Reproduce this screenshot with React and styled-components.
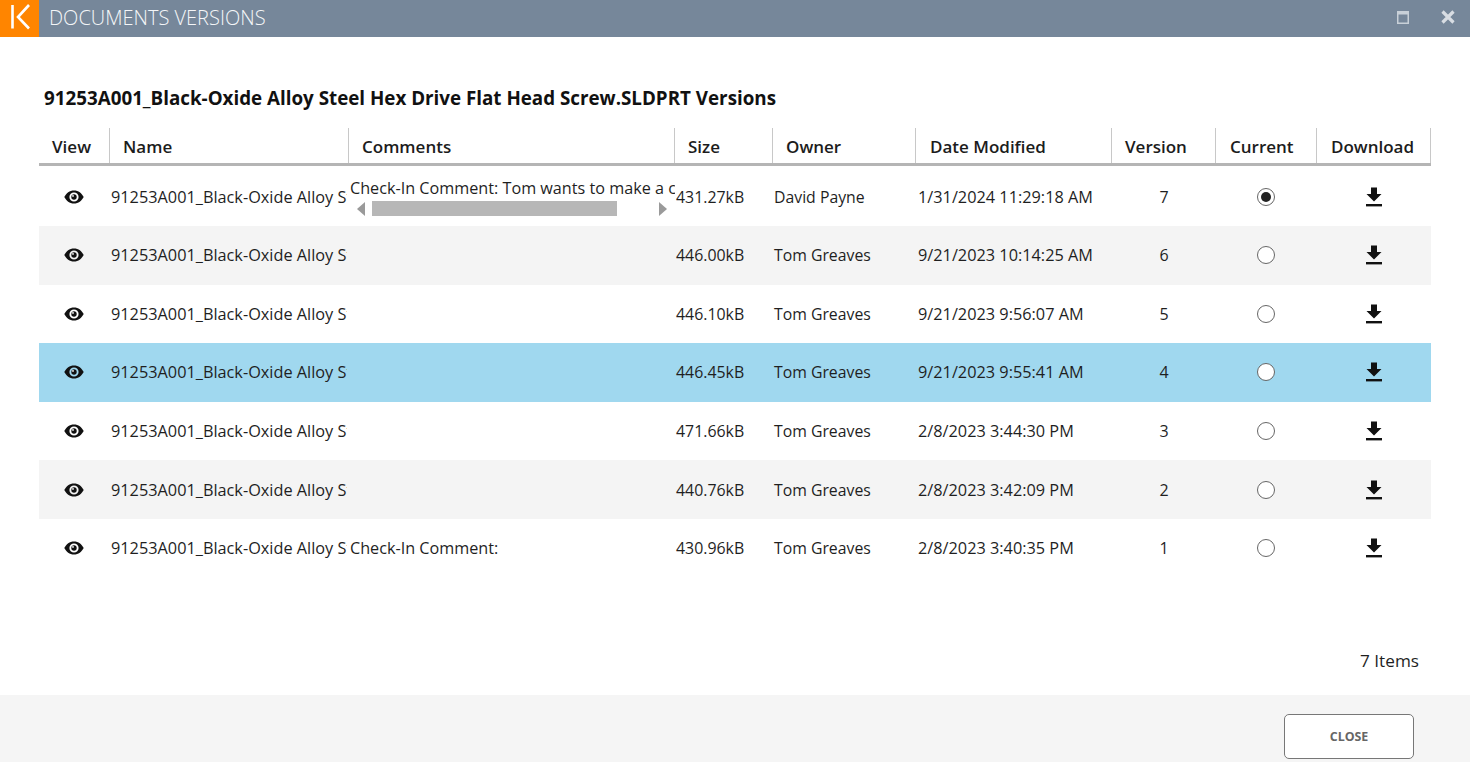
import styled, { createGlobalStyle } from "styled-components";

const COLUMNS = "71px 239px 326px 98px 143px 196px 104px 101px 114px";

const versions = [
  { size: "431.27kB", owner: "David Payne", date: "1/31/2024 11:29:18 AM", version: 7, current: true, comment: "Check-In Comment: Tom wants to make a change to this file", scroll: true },
  { size: "446.00kB", owner: "Tom Greaves", date: "9/21/2023 10:14:25 AM", version: 6 },
  { size: "446.10kB", owner: "Tom Greaves", date: "9/21/2023 9:56:07 AM", version: 5 },
  { size: "446.45kB", owner: "Tom Greaves", date: "9/21/2023 9:55:41 AM", version: 4, selected: true },
  { size: "471.66kB", owner: "Tom Greaves", date: "2/8/2023 3:44:30 PM", version: 3 },
  { size: "440.76kB", owner: "Tom Greaves", date: "2/8/2023 3:42:09 PM", version: 2 },
  { size: "430.96kB", owner: "Tom Greaves", date: "2/8/2023 3:40:35 PM", version: 1, comment: "Check-In Comment:" },
];

const headers = [
  ["View", 13],
  ["Name", 13],
  ["Comments", 13],
  ["Size", 13],
  ["Owner", 13],
  ["Date Modified", 14],
  ["Version", 13],
  ["Current", 14],
  ["Download", 14],
];

const GlobalStyle = createGlobalStyle`
  html, body {
    margin: 0;
    padding: 0;
    background: #fff;
    font-family: "Open Sans", "Noto Sans", "Liberation Sans", sans-serif;
    color: #1a1a1a;
    overflow: hidden;
  }
`;

const Page = styled.div`
  width: 1470px;
  height: 762px;
  display: flex;
  flex-direction: column;
`;

const TitleBar = styled.header`
  height: 37px;
  flex: none;
  display: flex;
  align-items: center;
  background: #76879a;
`;

const Logo = styled.div`
  width: 39px;
  height: 37px;
  background: #ff8500;
`;

const WindowTitle = styled.h1`
  flex: 1;
  margin: 0 0 3px 10px;
  font-size: 20px;
  font-weight: 300;
  color: #f4f6f8;
`;

const WindowButtons = styled.div`
  display: flex;
  align-items: center;
  gap: 32px;
  padding: 0 15px 3px 0;
`;

const Content = styled.main`
  flex: 1;
  display: flex;
  flex-direction: column;
  padding: 48px 39px 0 39px;
`;

const Heading = styled.h2`
  margin: 0 0 17px 5px;
  height: 26px;
  line-height: 26px;
  font-size: 18.8px;
  font-weight: 700;
  color: #111;
  white-space: nowrap;
`;

const Row = styled.div`
  display: grid;
  grid-template-columns: ${COLUMNS};
  height: 58.6px;
  background: ${({ $selected, $striped }) =>
    $selected ? "#a0d8ef" : $striped ? "#f4f4f4" : "transparent"};
`;

const HeaderRow = styled.div`
  display: grid;
  grid-template-columns: ${COLUMNS};
  height: 35px;
  border-bottom: 3px solid #b5b5b5;
  margin-bottom: 1.4px;
`;

const HeaderCell = styled.div`
  display: flex;
  align-items: flex-end;
  padding: 0 0 4px ${({ $pad }) => $pad}px;
  border-right: 1px solid #c8c8c8;
  font-size: 17px;
  font-weight: 600;
  line-height: 24px;
  color: #1c1c1c;
`;

const Cell = styled.div`
  display: flex;
  align-items: center;
  justify-content: ${({ $center }) => ($center ? "center" : "flex-start")};
  padding-left: ${({ $pad }) => $pad || 0}px;
  padding-right: ${({ $padRight }) => $padRight || 0}px;
  font-size: ${({ $size }) => $size || 16}px;
  white-space: nowrap;
  overflow: hidden;
  color: #1f1f1f;
`;

const NameText = styled.div`
  width: 236px;
  overflow: hidden;
`;

const CommentCell = styled.div`
  display: flex;
  flex-direction: column;
  justify-content: center;
  padding-left: 1px;
  font-size: 16.2px;
  white-space: nowrap;
  overflow: hidden;
  color: #1f1f1f;
`;

const CommentText = styled.div`
  line-height: 22px;
  overflow: hidden;
`;

const ScrollTrack = styled.div`
  display: flex;
  align-items: center;
  height: 15px;
  margin-top: 2px;
  padding-left: 7px;
`;

const ScrollThumb = styled.div`
  width: 245px;
  height: 15px;
  background: #b7b7b7;
  margin: 0 42px 0 7px;
`;

const Radio = styled.div`
  width: 18px;
  height: 18px;
  box-sizing: border-box;
  border-radius: 50%;
  border: 1.4px solid #666;
  background: #fff;
  display: flex;
  align-items: center;
  justify-content: center;
  &::after {
    content: "";
    display: ${({ $checked }) => ($checked ? "block" : "none")};
    width: 10px;
    height: 10px;
    border-radius: 50%;
    background: #222;
  }
`;

const ItemCount = styled.div`
  margin-top: auto;
  margin-bottom: 22px;
  text-align: right;
  padding-right: 12px;
  font-size: 17.2px;
  line-height: 24px;
  color: #1f1f1f;
`;

const Footer = styled.footer`
  height: 67px;
  box-sizing: border-box;
  flex: none;
  display: flex;
  justify-content: flex-end;
  align-items: flex-end;
  padding: 0 56px 3px 0;
  background: #f5f5f5;
`;

const CloseButton = styled.button`
  width: 130px;
  height: 45px;
  box-sizing: border-box;
  border: 1.5px solid #777;
  border-radius: 5px;
  background: #fff;
  font-family: inherit;
  font-size: 12.4px;
  font-weight: 700;
  color: #666;
`;

const LogoMark = () => (
  <svg width="39" height="37" viewBox="0 0 39 37" fill="none" stroke="#fff" strokeWidth="2.6">
    <path d="M12.5 5V28.5" />
    <path d="M29 5L18 17L29 28.5" />
  </svg>
);

const MaximizeIcon = () => (
  <svg width="12" height="13" viewBox="0 0 12 13" fill="none">
    <rect x="0.75" y="0.75" width="10.5" height="11.5" stroke="#c8d0d8" strokeWidth="1.5" />
    <rect x="0" y="0" width="12" height="3.5" fill="#c8d0d8" />
  </svg>
);

const CloseIcon = () => (
  <svg width="14" height="14" viewBox="0 0 14 14" fill="none" stroke="#d8dde3" strokeWidth="3.2">
    <path d="M1.5 1.5L12.5 12.5M12.5 1.5L1.5 12.5" />
  </svg>
);

const EyeIcon = () => (
  <svg width="20" height="14" viewBox="0 0 20 14">
    <path
      fillRule="evenodd"
      fill="#111"
      d="M10 0.5C5.6 0.5 2.2 3.2 0.3 7C2.2 10.8 5.6 13.5 10 13.5C14.4 13.5 17.8 10.8 19.7 7C17.8 3.2 14.4 0.5 10 0.5ZM10 2.4A4.6 4.6 0 1 1 10 11.6A4.6 4.6 0 1 1 10 2.4Z"
    />
    <circle cx="10" cy="7" r="2.7" fill="#111" />
    <circle cx="9" cy="5.9" r="0.9" fill="#fff" />
  </svg>
);

const DownloadIcon = () => (
  <svg width="18" height="20" viewBox="0 0 18 20" fill="#111">
    <path d="M6 0.5H12V7H16.5L9 14.5L1.5 7H6Z" />
    <rect x="1" y="17" width="16" height="2.4" />
  </svg>
);

const ArrowIcon = ({ right }) => (
  <svg width="8" height="14" viewBox="0 0 8 14" fill="#9a9a9a">
    <path d={right ? "M0 0L8 7L0 14Z" : "M8 0L0 7L8 14Z"} />
  </svg>
);

const VersionRow = ({ item, striped }) => (
  <Row $selected={item.selected} $striped={striped}>
    <Cell $center $padRight={1}>
      <EyeIcon />
    </Cell>
    <Cell $pad={1} $size={16.3}>
      <NameText>91253A001_Black-Oxide Alloy Steel Hex Drive Flat Head Screw.SLDPRT</NameText>
    </Cell>
    <CommentCell>
      {item.comment && <CommentText>{item.comment}</CommentText>}
      {item.scroll && (
        <ScrollTrack>
          <ArrowIcon />
          <ScrollThumb />
          <ArrowIcon right />
        </ScrollTrack>
      )}
    </CommentCell>
    <Cell $pad={1} $size={15.9}>{item.size}</Cell>
    <Cell $pad={1} $size={15.8}>{item.owner}</Cell>
    <Cell $pad={2} $size={16.3}>{item.date}</Cell>
    <Cell $center>{item.version}</Cell>
    <Cell $center $padRight={1}>
      <Radio $checked={item.current} />
    </Cell>
    <Cell $center>
      <DownloadIcon />
    </Cell>
  </Row>
);

export default function App() {
  return (
    <Page>
      <GlobalStyle />
      <TitleBar>
        <Logo>
          <LogoMark />
        </Logo>
        <WindowTitle>DOCUMENTS VERSIONS</WindowTitle>
        <WindowButtons>
          <MaximizeIcon />
          <CloseIcon />
        </WindowButtons>
      </TitleBar>
      <Content>
        <Heading>91253A001_Black-Oxide Alloy Steel Hex Drive Flat Head Screw.SLDPRT Versions</Heading>
        <HeaderRow>
          {headers.map(([label, pad]) => (
            <HeaderCell key={label} $pad={pad}>
              {label}
            </HeaderCell>
          ))}
        </HeaderRow>
        {versions.map((item, i) => (
          <VersionRow key={item.version} item={item} striped={i % 2 === 1} />
        ))}
        <ItemCount>7 Items</ItemCount>
      </Content>
      <Footer>
        <CloseButton>CLOSE</CloseButton>
      </Footer>
    </Page>
  );
}
